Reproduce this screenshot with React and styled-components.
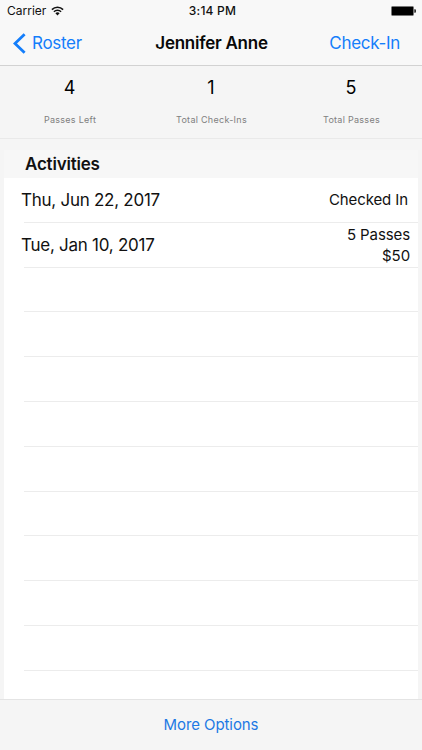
import styled, { createGlobalStyle } from "styled-components";

const GlobalStyle = createGlobalStyle`
  * {
    box-sizing: border-box;
  }
  body {
    margin: 0;
    background-color: #f5f5f5;
    font-family: Inter, "Liberation Sans", sans-serif;
    color: #111;
  }
`;

const Screen = styled.div`
  width: 422px;
  height: 750px;
  display: flex;
  flex-direction: column;
  overflow: hidden;
  background-color: #f5f5f5;
`;
const Header = styled.header`
  height: 66px;
  flex-shrink: 0;
  background-color: #f8f8f8;
  border-bottom: 1px solid #d2d2d2;
`;
const StatusBar = styled.div`
  height: 22px;
  display: grid;
  grid-template-columns: 1fr auto 1fr;
  align-items: center;
  padding: 0 6px 0 7px;
  font-size: 12px;
  line-height: 22px;
`;
const Carrier = styled.div`
  display: flex;
  align-items: center;
  gap: 5px;
`;
const Time = styled.div`
  font-weight: 500;
  letter-spacing: 0.2px;
  margin-left: 2px;
`;
const Battery = styled.svg`
  justify-self: end;
`;
const NavBar = styled.div`
  height: 42px;
  display: grid;
  grid-template-columns: 1fr auto 1fr;
  align-items: center;
  padding: 0 22px 0 13px;
`;
const NavButton = styled.button`
  display: flex;
  align-items: center;
  justify-self: ${(props) => props.$side};
  gap: 6px;
  padding: 0;
  border: none;
  background: none;
  font-family: inherit;
  font-size: 17px;
  line-height: 22px;
  letter-spacing: -0.3px;
  color: #147efb;
`;
const Title = styled.h1`
  margin: 0 0 0 10px;
  font-size: 17px;
  font-weight: 600;
  line-height: 22px;
  letter-spacing: -0.25px;
  color: #080808;
`;
const Stats = styled.section`
  height: 73px;
  flex-shrink: 0;
  display: grid;
  grid-template-columns: 140px 143px 137px;
  border-bottom: 1px solid #e9e9e9;
`;
const Stat = styled.div`
  display: flex;
  flex-direction: column;
  align-items: center;
  padding-top: 10px;
`;
const StatValue = styled.div`
  font-size: 18px;
  line-height: 24px;
  padding-right: 1px;
  color: #000;
`;
const StatLabel = styled.div`
  margin-top: 13px;
  font-size: 9px;
  line-height: 14px;
  letter-spacing: 0.28px;
  color: #808080;
`;
const Card = styled.section`
  flex: 1;
  min-height: 0;
  overflow: hidden;
  display: flex;
  flex-direction: column;
  margin: 11px 4px 0;
`;
const CardTitle = styled.h2`
  height: 28px;
  flex-shrink: 0;
  margin: 0;
  padding-left: 21px;
  background-color: #f7f7f7;
  font-size: 17px;
  font-weight: 600;
  line-height: 29px;
  letter-spacing: -0.2px;
`;
const Rows = styled.div`
  flex: 1;
  padding-left: 20px;
  background-color: #fff;
`;
const Row = styled.div`
  height: 44.8px;
  display: flex;
  align-items: center;
  justify-content: space-between;
  border-bottom: 1px solid #ececec;
`;
const RowDate = styled.div`
  margin-left: -3px;
  font-size: 17px;
  line-height: 22px;
  letter-spacing: -0.26px;
`;
const RowInfo = styled.div`
  padding-right: ${(props) => props.$inset};
  text-align: right;
  font-size: 15px;
  line-height: 21px;
  letter-spacing: -0.1px;
`;
const Footer = styled.footer`
  height: 51px;
  flex-shrink: 0;
  display: flex;
  justify-content: center;
  align-items: center;
  padding-bottom: 1px;
  border-top: 1px solid #e4e4e4;
`;
const FooterButton = styled.button`
  padding: 0;
  border: none;
  background: none;
  font-family: inherit;
  font-size: 15px;
  letter-spacing: -0.08px;
  color: #1c79e4;
`;

const stats = [
  { value: 4, label: "Passes Left" },
  { value: 1, label: "Total Check-Ins" },
  { value: 5, label: "Total Passes" },
];

const activities = [
  { date: "Thu, Jun 22, 2017", info: ["Checked In"], inset: "10px" },
  { date: "Tue, Jan 10, 2017", info: ["5 Passes", "$50"], inset: "8px" },
];

const emptyRows = Array.from({ length: 9 }, (_, i) => i);

const WifiIcon = () => (
  <svg width="13" height="10" viewBox="0 0 13 10" fill="none" stroke="#111">
    <path d="M0.9 3.6a8 8 0 0 1 11.2 0" strokeWidth="1.6" />
    <path d="M2.9 5.8a5.1 5.1 0 0 1 7.2 0" strokeWidth="1.5" />
    <path d="M6.5 9.4L4.4 7.3a3 3 0 0 1 4.2 0z" fill="#111" stroke="none" />
  </svg>
);

const BackIcon = () => (
  <svg width="13" height="21" viewBox="0 0 13 21" fill="none">
    <path d="M11.6 1.2L2 10.5l9.6 9.3" stroke="#147efb" strokeWidth="2.8" />
  </svg>
);

const App = () => {
  return (
    <>
      <GlobalStyle />
      <Screen>
        <Header>
          <StatusBar>
            <Carrier>
              Carrier
              <WifiIcon />
            </Carrier>
            <Time>3:14 PM</Time>
            <Battery width="25" height="10" viewBox="0 0 25 10">
              <rect x="0.5" y="0.5" width="22" height="9" rx="1" stroke="#777" />
              <path d="M23.4 3.2h0.6a0.8 0.8 0 0 1 0.8 0.8v2a0.8 0.8 0 0 1-0.8 0.8h-0.6z" />
            </Battery>
          </StatusBar>
          <NavBar>
            <NavButton $side="start">
              <BackIcon />
              Roster
            </NavButton>
            <Title>Jennifer Anne</Title>
            <NavButton $side="end">Check-In</NavButton>
          </NavBar>
        </Header>
        <Stats>
          {stats.map((stat) => (
            <Stat key={stat.label}>
              <StatValue>{stat.value}</StatValue>
              <StatLabel>{stat.label}</StatLabel>
            </Stat>
          ))}
        </Stats>
        <Card>
          <CardTitle>Activities</CardTitle>
          <Rows>
            {activities.map((activity) => (
              <Row key={activity.date}>
                <RowDate>{activity.date}</RowDate>
                <RowInfo $inset={activity.inset}>
                  {activity.info.map((line) => (
                    <div key={line}>{line}</div>
                  ))}
                </RowInfo>
              </Row>
            ))}
            {emptyRows.map((i) => (
              <Row key={i} />
            ))}
          </Rows>
        </Card>
        <Footer>
          <FooterButton>More Options</FooterButton>
        </Footer>
      </Screen>
    </>
  );
};

export default App;
